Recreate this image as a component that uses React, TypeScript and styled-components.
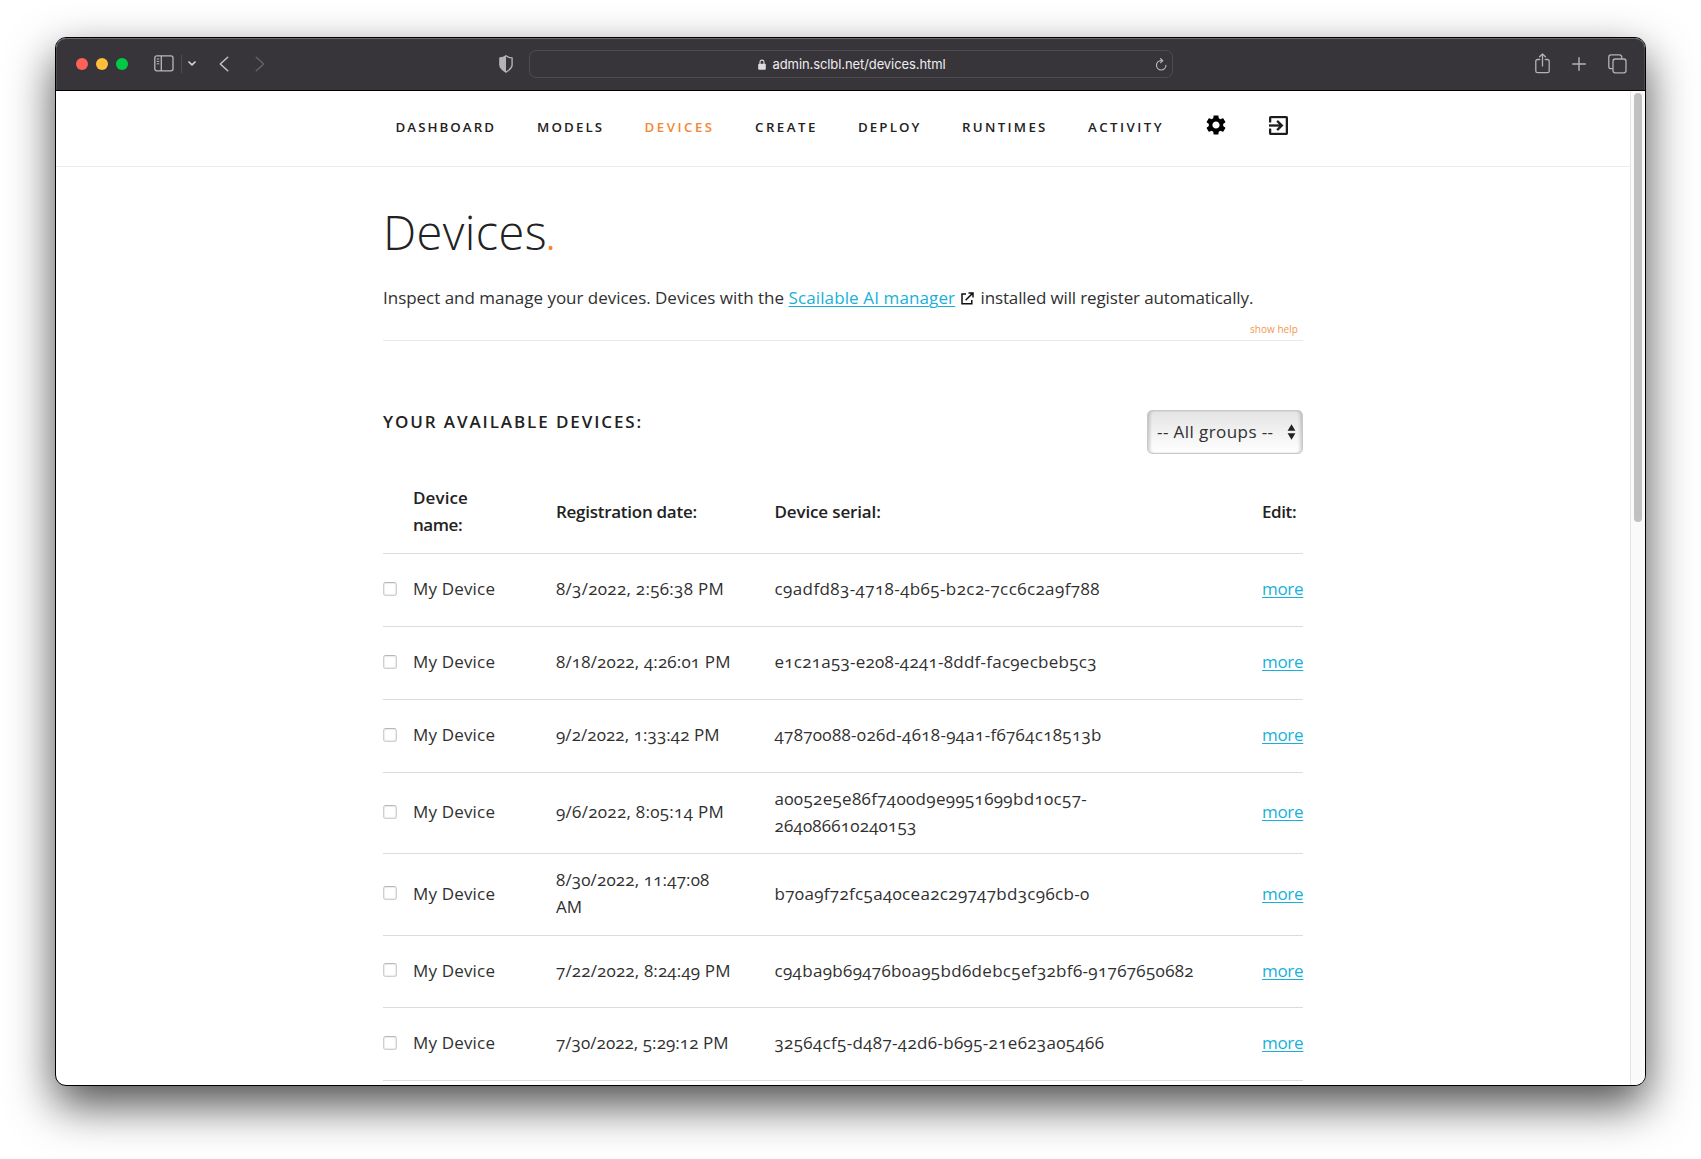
import React from "react";
import styled, { createGlobalStyle } from "styled-components";

const GlobalStyle = createGlobalStyle`
  * { box-sizing: border-box; }
  body {
    margin: 0;
    background: #fff;
    overflow: hidden;
    font-family: "Open Sans", "Noto Sans", sans-serif;
    font-variant-numeric: oldstyle-nums;
    color: #222;
  }
`;

const Desktop = styled.main`
  width: 1701px;
  height: 1159px;
  padding: 37px 55px 0;
  overflow: hidden;
`;

const BrowserWindow = styled.section`
  width: 1591px;
  height: 1049px;
  display: flex;
  flex-direction: column;
  border: 1px solid #000;
  border-radius: 11px;
  overflow: hidden;
  background: #fff;
  box-shadow: 0 19px 46px rgba(0, 0, 0, 0.7);
`;

/* ---------- browser toolbar ---------- */

const Toolbar = styled.header`
  flex: none;
  height: 53px;
  display: flex;
  align-items: center;
  padding: 0 18px 1px 20px;
  background: #37353a;
  border-bottom: 1px solid #000;
  border-radius: 10px 10px 0 0;
  box-shadow: inset 0 1px 0 #6b696e, inset 1px 0 0 #4d4b50, inset -1px 0 0 #4d4b50;

  svg {
    display: block;
    flex: none;
  }
`;

const Lights = styled.div`
  display: flex;
  gap: 8px;
  margin-right: 26px;
`;

const Light = styled.span<{ $color: string }>`
  width: 12px;
  height: 12px;
  border-radius: 50%;
  background: ${(p) => p.$color};
`;

const Divider = styled.span`
  width: 1px;
  height: 18px;
  margin: 0 6px 0 7px;
  background: #4e4c51;
`;

const Navigation = styled.div`
  display: flex;
  gap: 26px;
  margin-left: 23px;
`;

const ShieldSlot = styled.div`
  margin: 0 16px 0 234px;
`;

const AddressBar = styled.div`
  width: 644px;
  height: 28px;
  display: flex;
  align-items: center;
  padding: 1px 5px 0 227.5px;
  border: 1px solid #4e4c51;
  border-radius: 7px;
`;

const Address = styled.span`
  flex: 1;
  margin-left: 7px;
  font: 400 13px/18px Inter, sans-serif;
  letter-spacing: -0.09px;
  color: #eeedef;
`;

const WindowActions = styled.div`
  display: flex;
  align-items: center;
  gap: 22px;
  margin-left: auto;
`;

/* ---------- page ---------- */

const Viewport = styled.div`
  flex: 1;
  min-height: 0;
  display: flex;
`;

const Page = styled.div`
  flex: 1;
  min-width: 0;
  overflow: hidden;
`;

const ScrollTrack = styled.div`
  flex: none;
  width: 15px;
  padding: 2px 3px 0;
  background: #fafafa;
  border-left: 1px solid #e6e6e6;
`;

const ScrollThumb = styled.div`
  width: 8px;
  height: 429px;
  border-radius: 4px;
  background: #c1c1c1;
`;

const SiteNav = styled.nav`
  height: 76px;
  display: flex;
  align-items: center;
  padding: 0 0 3px 339.5px;
  border-bottom: 1px solid #ececec;
`;

const NavItem = styled.a<{ $width: number; $track: number; $active?: boolean }>`
  width: ${(p) => p.$width}px;
  font-size: 13.3px;
  font-weight: 600;
  line-height: 20px;
  letter-spacing: ${(p) => p.$track}px;
  white-space: nowrap;
  color: ${(p) => (p.$active ? "#f58634" : "#222")};
`;

const NavIcon = styled.a<{ $gap: number }>`
  display: flex;
  margin: 0 ${(p) => p.$gap}px 4px 0;
`;

const Content = styled.div`
  width: 920px;
  margin: 0 auto;
  padding-top: 35px;
`;

const Title = styled.h1`
  margin: 0 0 22px;
  font-size: 47px;
  font-weight: 300;
  line-height: 60px;
  letter-spacing: 0.4px;

  span {
    margin-left: -2px;
    color: #f58634;
  }
`;

const Intro = styled.p`
  display: flex;
  align-items: center;
  margin: 0;
  font-size: 17px;
  font-weight: 400;
  line-height: 28px;
  white-space: pre;
  color: #303030;
`;

const Run = styled.span<{ $track: number; $width?: number }>`
  letter-spacing: ${(p) => p.$track}px;
  ${(p) => p.$width && `width: ${p.$width}px;`}
`;

const Link = styled.a<{ $track?: number; $width?: number }>`
  color: #17b0da;
  text-decoration: underline;
  text-decoration-thickness: 1px;
  text-underline-offset: 2px;
  letter-spacing: ${(p) => p.$track ?? 0}px;
  ${(p) => p.$width && `width: ${p.$width}px;`}
`;

const ExternalSlot = styled.span`
  display: flex;
  width: 25px;
  padding-left: 5px;
`;

const HelpRow = styled.div`
  height: 29px;
  padding: 10px 5px 0 0;
  border-bottom: 1px solid #e8e8e8;
  font-size: 10px;
  line-height: 14px;
  letter-spacing: 0.05px;
  text-align: right;
  color: #f7954e;
`;

const ListHeader = styled.div`
  display: flex;
  justify-content: space-between;
  margin-top: 69px;
`;

const ListTitle = styled.h2`
  margin: 0;
  font-size: 17px;
  font-weight: 600;
  line-height: 24px;
  letter-spacing: 1.9px;
`;

const GroupSelect = styled.div`
  width: 156px;
  height: 44px;
  display: flex;
  align-items: center;
  justify-content: space-between;
  padding: 0 6px 1px 9px;
  border: 1px solid #c9c9c9;
  border-radius: 5px;
  background: linear-gradient(#e4e4e4, #fff);
  box-shadow: inset 3px 0 3px -1px rgba(0, 0, 0, 0.17), inset -3px 0 3px -1px rgba(0, 0, 0, 0.17);
  font-size: 17px;
  letter-spacing: 0.42px;
  color: #303030;
`;

const Row = styled.div<{ $height: number; $head?: boolean }>`
  height: ${(p) => p.$height}px;
  display: grid;
  grid-template-columns: 30px 143px 218.5px 487.5px 41px;
  align-items: center;
  padding: ${(p) => (p.$head ? "15px 0 0" : "0 0 3px")};
  border-bottom: 1px solid #dcdcdc;
  font-size: 17px;
  font-weight: ${(p) => (p.$head ? 600 : 400)};
  line-height: 27px;
  white-space: nowrap;
  color: ${(p) => (p.$head ? "#222" : "#303030")};
`;

const Line = styled.div<{ $track: number }>`
  letter-spacing: ${(p) => p.$track}px;
`;

const Checkbox = styled.span`
  display: block;
  width: 14px;
  height: 14px;
  border: 1px solid #cfcfcf;
  border-top-color: #b8b8b8;
  border-radius: 3px;
  background: #fff;
  box-shadow: inset 0 0 1px 1px #ececec;
`;

type TextLine = [text: string, track: number];
type Device = { height: number; date: TextLine[]; serial: TextLine[] };

const devices: Device[] = [
  { height: 73, date: [["8/3/2022, 2:56:38 PM", 0.3]], serial: [["c9adfd83-4718-4b65-b2c2-7cc6c2a9f788", 0.41]] },
  { height: 73, date: [["8/18/2022, 4:26:01 PM", 0.16]], serial: [["e1c21a53-e208-4241-8ddf-fac9ecbeb5c3", 0.26]] },
  { height: 73, date: [["9/2/2022, 1:33:42 PM", 0.08]], serial: [["47870088-026d-4618-94a1-f6764c18513b", 0.31]] },
  {
    height: 81,
    date: [["9/6/2022, 8:05:14 PM", 0.3]],
    serial: [["a0052e5e86f7400d9e9951699bd10c57-", 0.33], ["264086610240153", 0.2]],
  },
  {
    height: 82,
    date: [["8/30/2022, 11:47:08", 0.15], ["AM", 0]],
    serial: [["b70a9f72fc5a40cea2c29747bd3c96cb-0", 0.33]],
  },
  { height: 72, date: [["7/22/2022, 8:24:49 PM", 0.16]], serial: [["c94ba9b69476b0a95bd6debc5ef32bf6-91767650682", 0.34]] },
  { height: 73, date: [["7/30/2022, 5:29:12 PM", 0.06]], serial: [["32564cf5-d487-42d6-b695-21e623a05466", 0.34]] },
];

const navItems = [
  { label: "DASHBOARD", width: 141.5, track: 2.05 },
  { label: "MODELS", width: 107.5, track: 2.15 },
  { label: "DEVICES", width: 110.5, track: 2.5, active: true },
  { label: "CREATE", width: 103, track: 2.45 },
  { label: "DEPLOY", width: 104, track: 2.1 },
  { label: "RUNTIMES", width: 126, track: 2.3 },
  { label: "ACTIVITY", width: 117, track: 2.45 },
];

function Lines({ lines }: { lines: TextLine[] }) {
  return (
    <div>
      {lines.map(([text, track]) => (
        <Line key={text} $track={track}>{text}</Line>
      ))}
    </div>
  );
}

function BrowserToolbar() {
  return (
    <Toolbar>
      <Lights>
        <Light $color="#ff6059" />
        <Light $color="#ffbe3c" />
        <Light $color="#00ca48" />
      </Lights>
      <svg width="20" height="17" viewBox="0 0 20 17" fill="none" stroke="#b8b7ba" strokeWidth="1.3">
        <rect x="0.8" y="0.8" width="18.2" height="15" rx="2" />
        <path d="M7.3 1v15" />
        <path d="M2.7 4h2.6M2.7 6.4h2.6M2.7 8.8h2.6" strokeWidth="1" />
      </svg>
      <Divider />
      <svg width="8" height="5" viewBox="0 0 8 5" fill="none" stroke="#d2d1d4" strokeWidth="1.7" strokeLinecap="round" strokeLinejoin="round">
        <path d="M1 1l3 2.8L7 1" />
      </svg>
      <Navigation>
        <svg width="10" height="16" viewBox="0 0 10 16" fill="none" stroke="#c3c2c5" strokeWidth="1.5" strokeLinecap="round" strokeLinejoin="round">
          <path d="M8.7 1.2L1.3 8l7.4 6.8" />
        </svg>
        <svg width="10" height="16" viewBox="0 0 10 16" fill="none" stroke="#636166" strokeWidth="1.5" strokeLinecap="round" strokeLinejoin="round">
          <path d="M1.3 1.2L8.7 8l-7.4 6.8" />
        </svg>
      </Navigation>
      <ShieldSlot>
        <svg width="14" height="18" viewBox="0 0 14 18">
          <path d="M7 .8C5.2 2.2 3 2.8.9 2.9v7.2c0 3.200 2.700 5 6.100 7 3.400-2 6.100-3.800 6.100-7V2.900C11 2.800 8.800 2.200 7 .8z" fill="none" stroke="#b3b2b5" strokeWidth="1.4" strokeLinejoin="round" />
          <path d="M7 .8C5.200 2.200 3 2.800.9 2.900v7.200c0 3.200 2.700 5 6.100 7z" fill="#b3b2b5" />
        </svg>
      </ShieldSlot>
      <AddressBar>
        <svg width="8" height="11" viewBox="0 0 8 11">
          <rect x="0.200" y="4.700" width="7.600" height="6" rx="1" fill="#dddce0" />
          <path d="M2 5V3.100a2 2 0 0 1 4 0V5" fill="none" stroke="#dddce0" strokeWidth="1.100" />
        </svg>
        <Address>admin.sclbl.net/devices.html</Address>
        <svg width="12" height="13" viewBox="0 0 12 13" fill="none" stroke="#b8b7ba" strokeWidth="1.200" strokeLinecap="round" strokeLinejoin="round">
          <path d="M10.900 7.300a4.700 4.700 0 1 1-4.700-4.700h1.400" />
          <path d="M5.600.7l2.100 1.900-2 2.100" />
        </svg>
      </AddressBar>
      <WindowActions>
        <svg width="15" height="21" viewBox="0 0 15 21" fill="none" stroke="#b3b2b5" strokeWidth="1.300" strokeLinecap="round" strokeLinejoin="round">
          <path d="M4.700 6.500H2.400A1.600 1.600 0 0 0 .8 8.100v10a1.600 1.600 0 0 0 1.600 1.600h10.200a1.600 1.600 0 0 0 1.600-1.600v-10a1.600 1.600 0 0 0-1.600-1.600h-2.300" />
          <path d="M7.500 13V1M4.600 3.700L7.500.9l2.900 2.800" />
        </svg>
        <svg width="14" height="14" viewBox="0 0 14 14" fill="none" stroke="#b3b2b5" strokeWidth="1.400" strokeLinecap="round">
          <path d="M7 .7v12.600M.7 7h12.600" />
        </svg>
        <svg width="19" height="20" viewBox="0 0 19 20" fill="none" stroke="#b3b2b5" strokeWidth="1.300" strokeLinejoin="round">
          <rect x="5" y="5" width="13" height="13.800" rx="2.200" />
          <path d="M4.800 14.600H3A2.200 2.200 0 0 1 .8 12.400V3A2.200 2.200 0 0 1 3 .8h8.500A2.200 2.200 0 0 1 13.700 3v1.800" />
        </svg>
      </WindowActions>
    </Toolbar>
  );
}

function SiteHeader() {
  return (
    <SiteNav>
      {navItems.map((item) => (
        <NavItem key={item.label} $width={item.width} $track={item.track} $active={item.active}>
          {item.label}
        </NavItem>
      ))}
      <NavIcon $gap={41.5}>
        <svg width="22" height="22" viewBox="1 1 22 22" fill="#000">
          <path d="M19.140 12.940c.04-.3.060-.61.060-.94 0-.32-.02-.64-.07-.94l2.030-1.580c.18-.14.230-.41.120-.61l-1.920-3.320c-.12-.22-.37-.29-.59-.22l-2.390.960c-.5-.38-1.030-.7-1.620-.94l-.36-2.540c-.04-.24-.24-.41-.48-.41h-3.840c-.24 0-.43.170-.47.410l-.36 2.540c-.59.240-1.130.570-1.620.940l-2.390-.96c-.22-.08-.47 0-.59.220L2.740 8.870c-.12.210-.08.470.120.610l2.030 1.580c-.05.300-.09.630-.09.940s.02.640.070.940l-2.030 1.580c-.18.140-.23.410-.12.610l1.920 3.320c.12.220.37.290.59.220l2.390-.96c.5.380 1.030.700 1.620.940l.36 2.540c.05.240.240.410.480.410h3.840c.24 0 .44-.17.470-.41l.36-2.540c.59-.24 1.130-.56 1.620-.94l2.390.960c.22.080.470 0 .59-.22l1.920-3.320c.12-.22.070-.47-.12-.61l-2.010-1.580zM12 15.600c-1.980 0-3.600-1.620-3.600-3.600s1.620-3.600 3.600-3.600 3.600 1.620 3.600 3.600-1.620 3.600-3.600 3.600z" />
        </svg>
      </NavIcon>
      <NavIcon $gap={0}>
        <svg width="19" height="19" viewBox="3 3 18 18" fill="#1c1c1c" stroke="#1c1c1c" strokeWidth="0.3">
          <path d="M10.090 15.590L11.500 17l5-5-5-5-1.410 1.410L12.670 11H3v2h9.670l-2.580 2.590zM19 3H5c-1.110 0-2 .9-2 2v4h2V5h14v14H5v-4H3v4c0 1.100.890 2 2 2h14c1.100 0 2-.9 2-2V5c0-1.100-.9-2-2-2z" />
        </svg>
      </NavIcon>
    </SiteNav>
  );
}

export default function App() {
  return (
    <Desktop>
      <GlobalStyle />
      <BrowserWindow>
        <BrowserToolbar />
        <Viewport>
          <Page>
            <SiteHeader />
            <Content>
              <Title>Devices<span>.</span></Title>
              <Intro>
                <Run $track={-0.02} $width={405.5}>Inspect and manage your devices. Devices with the</Run>
                <Link $track={0.12} $width={167}>Scailable AI manager</Link>
                <ExternalSlot>
                  <svg width="13" height="13" viewBox="0 0 13 13" fill="none" stroke="#111" strokeWidth="1.500">
                    <path d="M5 2H1v9.800h9.800V8" />
                    <path d="M4.600 8.200L11.500 1.400M7.500 1h4.500v4.500" />
                  </svg>
                </ExternalSlot>
                <Run $track={-0.13}>installed will register automatically.</Run>
              </Intro>
              <HelpRow>show help</HelpRow>
              <ListHeader>
                <ListTitle>YOUR AVAILABLE DEVICES:</ListTitle>
                <GroupSelect>
                  <span>-- All groups --</span>
                  <svg width="9" height="16" viewBox="0 0 9 16" fill="#222">
                    <path d="M4.500.3L8.400 6.800H.6zM4.500 15.700L.6 9.200h7.800z" />
                  </svg>
                </GroupSelect>
              </ListHeader>
              <Row $height={100} $head>
                <span />
                <Lines lines={[["Device", 0.1], ["name:", -0.44]]} />
                <Lines lines={[["Registration date:", -0.27]]} />
                <Lines lines={[["Device serial:", -0.14]]} />
                <Lines lines={[["Edit:", -0.4]]} />
              </Row>
              {devices.map((device) => (
                <Row key={device.serial[0][0]} $height={device.height}>
                  <Checkbox />
                  <Lines lines={[["My Device", 0.17]]} />
                  <Lines lines={device.date} />
                  <Lines lines={device.serial} />
                  <Link $track={-0.3}>more</Link>
                </Row>
              ))}
            </Content>
          </Page>
          <ScrollTrack>
            <ScrollThumb />
          </ScrollTrack>
        </Viewport>
      </BrowserWindow>
    </Desktop>
  );
}
